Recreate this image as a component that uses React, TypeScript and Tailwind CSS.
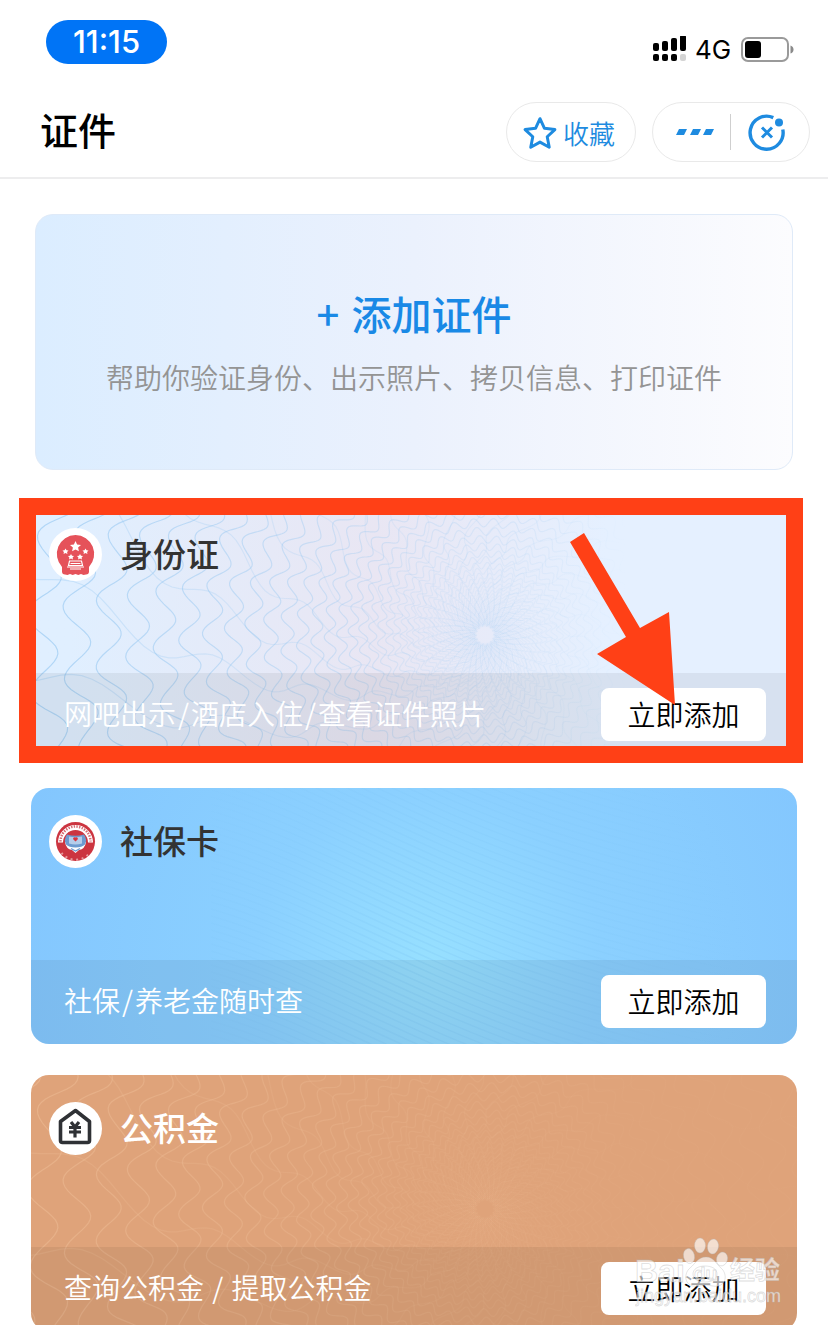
import React from "react";

const CENTER_X = 454;
const CENTER_Y = 134;

type Line = { d: string; opacity: number };

// closed wavy rings around the rosette, spacing grows with the radius
function buildRings() {
  const rings: Line[] = [];
  let radius = 10;
  for (let k = 0; radius < 560; k++) {
    const points: string[] = [];
    const amp = 0.035 + 0.12 * Math.exp(-radius / 30);
    for (let i = 0; i <= 720; i++) {
      const a = (i / 720) * Math.PI * 2;
      const r = radius * (1 + amp * Math.sin(36 * a + k * 0.8));
      points.push(`${(CENTER_X + r * Math.cos(a)).toFixed(1)} ${(CENTER_Y + r * Math.sin(a)).toFixed(1)}`);
    }
    rings.push({ d: "M" + points.join("L"), opacity: Math.min(1, 0.2 + radius / 160) });
    radius *= 1.084;
  }
  return rings;
}

// swirling spokes that cross the rings, every other one starts further out
function buildSpokes() {
  const spokes: Line[] = [];
  for (let k = 0; k < 28; k++) {
    const points: string[] = [];
    for (let r = k % 2 ? 8 : 22; r < 520; r *= 1.025) {
      const a = (k / 28) * Math.PI * 2 + 0.5 * Math.log(r) + 0.04 * Math.sin(Math.log(r) * 16);
      points.push(`${(CENTER_X + r * Math.cos(a)).toFixed(1)} ${(CENTER_Y + r * Math.sin(a)).toFixed(1)}`);
    }
    spokes.push({ d: "M" + points.join("L"), opacity: 0.55 });
  }
  return spokes;
}

const lines = [...buildRings(), ...buildSpokes()];

function Guilloche({ id, color, from, to }: { id: string; color: string; from: number; to: number }) {
  return (
    <svg className="absolute inset-0 h-full w-full" viewBox="0 0 766 256" preserveAspectRatio="xMidYMid slice" fill="none" aria-hidden="true">
      <defs>
        <linearGradient id={id} gradientUnits="userSpaceOnUse" x1="0" y1="0" x2="766" y2="0">
          <stop offset="0" stopColor={color} stopOpacity={from} />
          <stop offset="0.3" stopColor={color} stopOpacity={from * 0.65} />
          <stop offset="0.5" stopColor={color} stopOpacity={from * 0.4} />
          <stop offset="0.62" stopColor={color} stopOpacity={from * 0.35} />
          <stop offset="0.78" stopColor={color} stopOpacity={to} />
        </linearGradient>
      </defs>
      <g stroke={`url(#${id})`} strokeWidth="1.2">
        {lines.map((line, i) => <path key={i} d={line.d} strokeOpacity={line.opacity} />)}
      </g>
    </svg>
  );
}

function FineLines() {
  return (
    <svg className="absolute inset-0 h-full w-full" viewBox="0 0 766 256" preserveAspectRatio="xMidYMid slice" fill="none" aria-hidden="true">
      <defs>
        <radialGradient id="fine" gradientUnits="userSpaceOnUse" cx="400" cy="180" r="330">
          <stop offset="0" stopColor="#6fb9ee" stopOpacity="0.2" />
          <stop offset="1" stopColor="#6fb9ee" stopOpacity="0" />
        </radialGradient>
      </defs>
      <g stroke="url(#fine)" strokeWidth="1.5">
        {Array.from({ length: 74 }, (_, i) => (
          <path key={i} d={`M180 ${i * 7 - 250}C320 ${i * 7 - 210} 440 ${i * 7 - 110} 720 ${i * 7 - 60}`} />
        ))}
      </g>
    </svg>
  );
}

function EmblemIcon() {
  return (
    <svg className="h-[53px] w-[53px]" viewBox="0 0 53 53" aria-hidden="true">
      <circle cx="26.5" cy="26.5" r="26.5" fill="#fff" />
      <path d="M26.5 7a19 19 0 0 1 13.500 32v4.500q0 3-3 3l-2.500.5-2.500-1-2.700 1-2.800-1-2.800 1-2.700-1-2.500 1-2.500-.5q-3 0-3-3V39A19 19 0 0 1 26.500 7z" fill="#e5525a" />
      <path d="M26.500 13l1.600 3.500 3.900.4-2.900 2.600.8 3.800-3.400-1.900-3.400 1.900.8-3.800-2.900-2.600 3.900-.4z" fill="#fff" />
      <g fill="#fff">
        <path d="M16.500 20.500l1 1.800 2 .3-1.400 1.400.3 2-1.900-.9-1.900.9.300-2-1.400-1.400 2-.3z" />
        <path d="M36.500 20.500l1 1.800 2 .3-1.400 1.400.3 2-1.900-.9-1.900.9.300-2-1.400-1.400 2-.3z" />
        <path d="M22 26l1 1.800 2 .3-1.400 1.400.3 2-1.900-.9-1.900.9.300-2-1.400-1.400 2-.3z" />
        <path d="M31 26l1 1.800 2 .3-1.400 1.400.3 2-1.900-.9-1.900.9.300-2-1.400-1.400 2-.3z" />
      </g>
      <path d="M20.500 33h12l1 4.500h-14zM18 39h17M21 41h11" fill="none" stroke="#fff" strokeWidth="1.200" />
      <path d="M21.500 35.500h10" stroke="#fff" strokeWidth="1" />
    </svg>
  );
}

function SocialIcon() {
  return (
    <svg className="h-[53px] w-[53px]" viewBox="0 0 53 53" aria-hidden="true">
      <circle cx="26.500" cy="26.500" r="26.500" fill="#fff" />
      <circle cx="26.500" cy="26.500" r="19.500" fill="#cc3540" />
      <path d="M11.500 27.500a15 15 0 0 1 30 0" fill="none" stroke="#fff" strokeWidth="5" />
      <path d="M11.500 26.500a15 15 0 0 1 30 0" fill="none" stroke="#d66a72" strokeWidth="2.500" strokeDasharray="1.400 1.300" />
      <path d="M12.500 38a18 18 0 0 0 28 0" fill="none" stroke="#e79a9e" strokeWidth="2" strokeDasharray="2 3.500" />
      <path d="M16 27q1 7 7 8l3.500 3 3.500-3q6-1 7-8z" fill="#fff" />
      <path d="M18 19.500q8.500 2.500 17 0 3.500 5 1 10-3 3-9.500 3t-9.500-3q-2.500-5 1-10z" fill="#6d9bd0" />
      <path d="M20 21.500q6.500 1.500 13 0v7q-6.500 2-13 0z" fill="#b5cdea" />
      <path d="M26.500 26.500l-2.300-2.300a1.500 1.500 0 0 1 2.300-1.700 1.500 1.500 0 0 1 2.300 1.700z" fill="#d7353f" />
      <path d="M22 33.500l4.500 2.500 4.500-2.500" fill="none" stroke="#6d9bd0" strokeWidth="1.300" />
    </svg>
  );
}

function HouseIcon() {
  return (
    <svg className="h-[53px] w-[53px]" viewBox="0 0 53 53" fill="none" aria-hidden="true">
      <circle cx="26.500" cy="26.500" r="26.500" fill="#fff" />
      <g stroke="#2f3135" strokeLinejoin="round">
        <path d="M11.500 19.500L26.500 8.500 40.500 19.500v19q0 2-2 2h-25q-2 0-2-2z" strokeWidth="3.600" />
        <path d="M22 20l4 5 4-5M20 25.500h12M20 30h12M26 25v10.500" strokeWidth="3.200" />
      </g>
    </svg>
  );
}

function StatusBar() {
  return (
    <div className="flex h-[84px] shrink-0 items-start justify-between pr-[34px] pl-[46px] pt-5">
      <div className="flex h-11 w-[121px] items-center justify-center rounded-full bg-[#0074f6] font-['Inter'] text-[31px] font-medium text-white">11:15</div>
      <div className="mt-4 flex h-[26px] items-center">
        <svg className="h-[26px] w-[34px]" viewBox="0 0 34 26" aria-hidden="true">
          <rect x="0" y="7" width="6" height="8" rx="2" />
          <rect x="9" y="5" width="6" height="10" rx="2" />
          <rect x="18" y="2" width="6" height="13" rx="2" />
          <rect x="27" y="-1" width="6" height="16" rx="2" />
          <rect x="0" y="18" width="6" height="7" rx="2" />
          <rect x="9" y="18" width="6" height="7" rx="2" />
          <rect x="18" y="18" width="6" height="7" rx="2" />
          <rect x="27" y="18" width="6" height="7" rx="2" fill="#d4d4d4" />
        </svg>
        <span className="ml-2 w-[46px] font-['Inter'] text-[26px]">4G</span>
        <svg className="h-[26px] w-[53px]" viewBox="0 0 53 26" aria-hidden="true">
          <rect x="1" y="2" width="46" height="23" rx="6" fill="none" stroke="#9a9a9a" strokeWidth="2" />
          <rect x="4" y="5" width="16" height="17" rx="3" />
          <path d="M49.500 9.500q3 1 3 4t-3 4z" fill="#8a8a8a" />
        </svg>
      </div>
    </div>
  );
}

function Header() {
  return (
    <header className="flex h-[95px] shrink-0 items-start justify-between border-b-2 border-[#ededee] pr-[18px] pl-10 pt-[18px]">
      <h1 className="text-[38px] leading-[54px] font-medium text-black">证件</h1>
      <div className="flex gap-4 text-[#1e8be0]">
        <button type="button" className="flex h-[60px] w-[130px] items-center justify-center gap-1.5 rounded-full border border-[#e9e9e9] pr-1 text-[26px] font-[350]">
          <svg className="h-[34px] w-[34px]" viewBox="0 0 32 32" fill="none" stroke="currentColor" strokeWidth="2.8" strokeLinejoin="round" aria-hidden="true">
            <path d="M16 3.500l4.200 9 9.800 1.200-7.200 6.800 1.900 9.800-8.700-4.800-8.700 4.800 1.900-9.800L2 13.700l9.800-1.200z" />
          </svg>
          收藏
        </button>
        <div className="flex h-[60px] w-[158px] items-center rounded-full border border-[#e9e9e9]">
          <button type="button" aria-label="更多" className="flex h-full w-[77px] items-center justify-end pr-4">
            <svg className="h-2 w-[38px]" viewBox="0 0 38 8" fill="currentColor" aria-hidden="true">
              <path d="M3 1h8l-3 6H0zM17 1h8l-3 6h-8zM30 1h8l-3 6h-8z" />
            </svg>
          </button>
          <span className="h-9 w-px bg-[#cfcfcf]" />
          <button type="button" aria-label="关闭" className="flex h-full flex-1 items-center pl-[17px]">
            <svg className="h-[38px] w-[38px]" viewBox="0 0 38 38" fill="none" stroke="currentColor" aria-hidden="true">
              <path d="M25.300 4.600A16.500 16.500 0 1 0 34.800 16.500" strokeWidth="3.400" />
              <path d="M14 14.500l10 10M24 14.500l-10 10" strokeWidth="3" />
              <circle cx="31" cy="9.500" r="4" fill="currentColor" stroke="none" />
            </svg>
          </button>
        </div>
      </div>
    </header>
  );
}

function Watermark() {
  return (
    <svg className="pointer-events-none absolute top-[162px] right-2 h-[76px] w-[154px]" viewBox="0 0 154 76" aria-hidden="true">
      <g fill="#fff" fillOpacity="0.65" stroke="#b5b5b5" strokeOpacity="0.45" strokeWidth="0.8">
        <ellipse cx="54" cy="19" rx="5.500" ry="7.500" transform="rotate(-12 54 19)" />
        <ellipse cx="65" cy="8.500" rx="5.500" ry="7.500" />
        <ellipse cx="78" cy="9.500" rx="5.500" ry="7.500" transform="rotate(10 78 9.500)" />
        <ellipse cx="87" cy="22" rx="5.500" ry="7" transform="rotate(15 87 22)" />
        <path fillRule="evenodd" d="M71 20c8 0 10 7 15 11 6 5 6 16-3 18-4 1-8-1-12-1s-9 2-13 1c-9-2-9-13-3-18 5-4 8-11 16-11zM70 29c-7 0-12 3-12 8s5 8 12 8 12-3 12-8-5-8-12-8z" />
        <text x="0" y="45" fontSize="32" fontWeight="700" fontFamily="Liberation Sans">Bai</text>
        <text x="59" y="43" fontSize="19" fontWeight="700" fontFamily="Liberation Sans">du</text>
        <text x="95" y="42" fontSize="25" fontWeight="700" fontFamily="Noto Sans CJK SC">经验</text>
        <text x="1" y="65" fontSize="18" fontFamily="Liberation Sans">jingyan.baidu.com</text>
      </g>
    </svg>
  );
}

type CardProps = {
  title: string;
  desc: string;
  icon: React.ReactNode;
  pattern: React.ReactNode;
  className: string;
  titleClass: string;
  children?: React.ReactNode;
};

function DocCard({ title, desc, icon, pattern, className, titleClass, children }: CardProps) {
  return (
    <section className="relative shrink-0">
      <div className={`relative flex h-64 flex-col justify-between overflow-hidden rounded-[18px] ${className}`}>
        {pattern}
        <div className="relative flex items-center gap-[18px] pt-[27px] pl-[18px]">
          {icon}
          <h2 className={`pb-1 text-[33px] leading-[46px] font-medium ${titleClass}`}>{title}</h2>
        </div>
        <div className="relative flex h-[84px] items-center justify-between bg-black/6 pr-[31px] pb-0.5 pl-[33px]">
          <p className="pb-0.5 text-[28px] leading-10 font-[350] text-white">
            {desc.split("/").map((part, i) => (
              <React.Fragment key={i}>
                {i > 0 && <span className="px-0.5">/</span>}
                {part}
              </React.Fragment>
            ))}
          </p>
          <button type="button" className="h-[53px] w-[165px] rounded-lg bg-white text-[28px] leading-10 font-[350] text-black">立即添加</button>
        </div>
      </div>
      {children}
    </section>
  );
}

export default function App() {
  return (
    <div className="flex h-screen flex-col overflow-hidden bg-white font-['Noto_Sans_CJK_SC',sans-serif]">
      <StatusBar />
      <Header />
      <main className="flex flex-1 flex-col gap-[31px] px-[31px] pt-[35px]">
        <button type="button" className="mx-1 flex h-64 shrink-0 flex-col items-center justify-center gap-3.5 rounded-[18px] border border-[#dfeaf8] bg-linear-to-r from-[#dbedff] via-[#ebf1fd] to-[#fcfcfe] pb-1">
          <span className="flex gap-3 text-[40px] leading-[60px] font-medium text-[#1989e6]">
            <span>+</span>
            <span>添加证件</span>
          </span>
          <span className="text-[28px] leading-10 font-[350] text-[#949494]">帮助你验证身份、出示照片、拷贝信息、打印证件</span>
        </button>

        <DocCard
          title="身份证"
          desc="网吧出示/酒店入住/查看证件照片"
          icon={<EmblemIcon />}
          pattern={<Guilloche id="idLines" color="#8fc4f0" from={0.6} to={0} />}
          className="bg-linear-to-r from-[#e0efff] from-5% via-[#e9e6f3] via-45% to-[#e5f0ff] to-75%"
          titleClass="text-[#333333]"
        >
          <div className="pointer-events-none absolute -top-[3px] -right-[6px] -bottom-[6px] -left-[12px] border-[17px] border-[#ff4016]" />
          <svg className="pointer-events-none absolute top-8 right-[122px] h-[172px] w-[105px]" viewBox="0 0 105 172" fill="#ff4016" aria-hidden="true">
            <path d="M0 9L14 0l56 95 29-16 6 93-78-51 29-17z" />
          </svg>
        </DocCard>

        <DocCard
          title="社保卡"
          desc="社保/养老金随时查"
          icon={<SocialIcon />}
          pattern={<FineLines />}
          className="bg-radial-[circle_at_52%_68%] from-[#97e0ff] via-[#8bd0ff] via-40% to-[#83c6fe]"
          titleClass="text-[#333333]"
        />

        <DocCard
          title="公积金"
          desc="查询公积金 / 提取公积金"
          icon={<HouseIcon />}
          pattern={<Guilloche id="fundLines" color="#efbf98" from={0.5} to={0.05} />}
          className="bg-[#dfa37a]"
          titleClass="text-white"
        >
          <Watermark />
        </DocCard>
      </main>
    </div>
  );
}
